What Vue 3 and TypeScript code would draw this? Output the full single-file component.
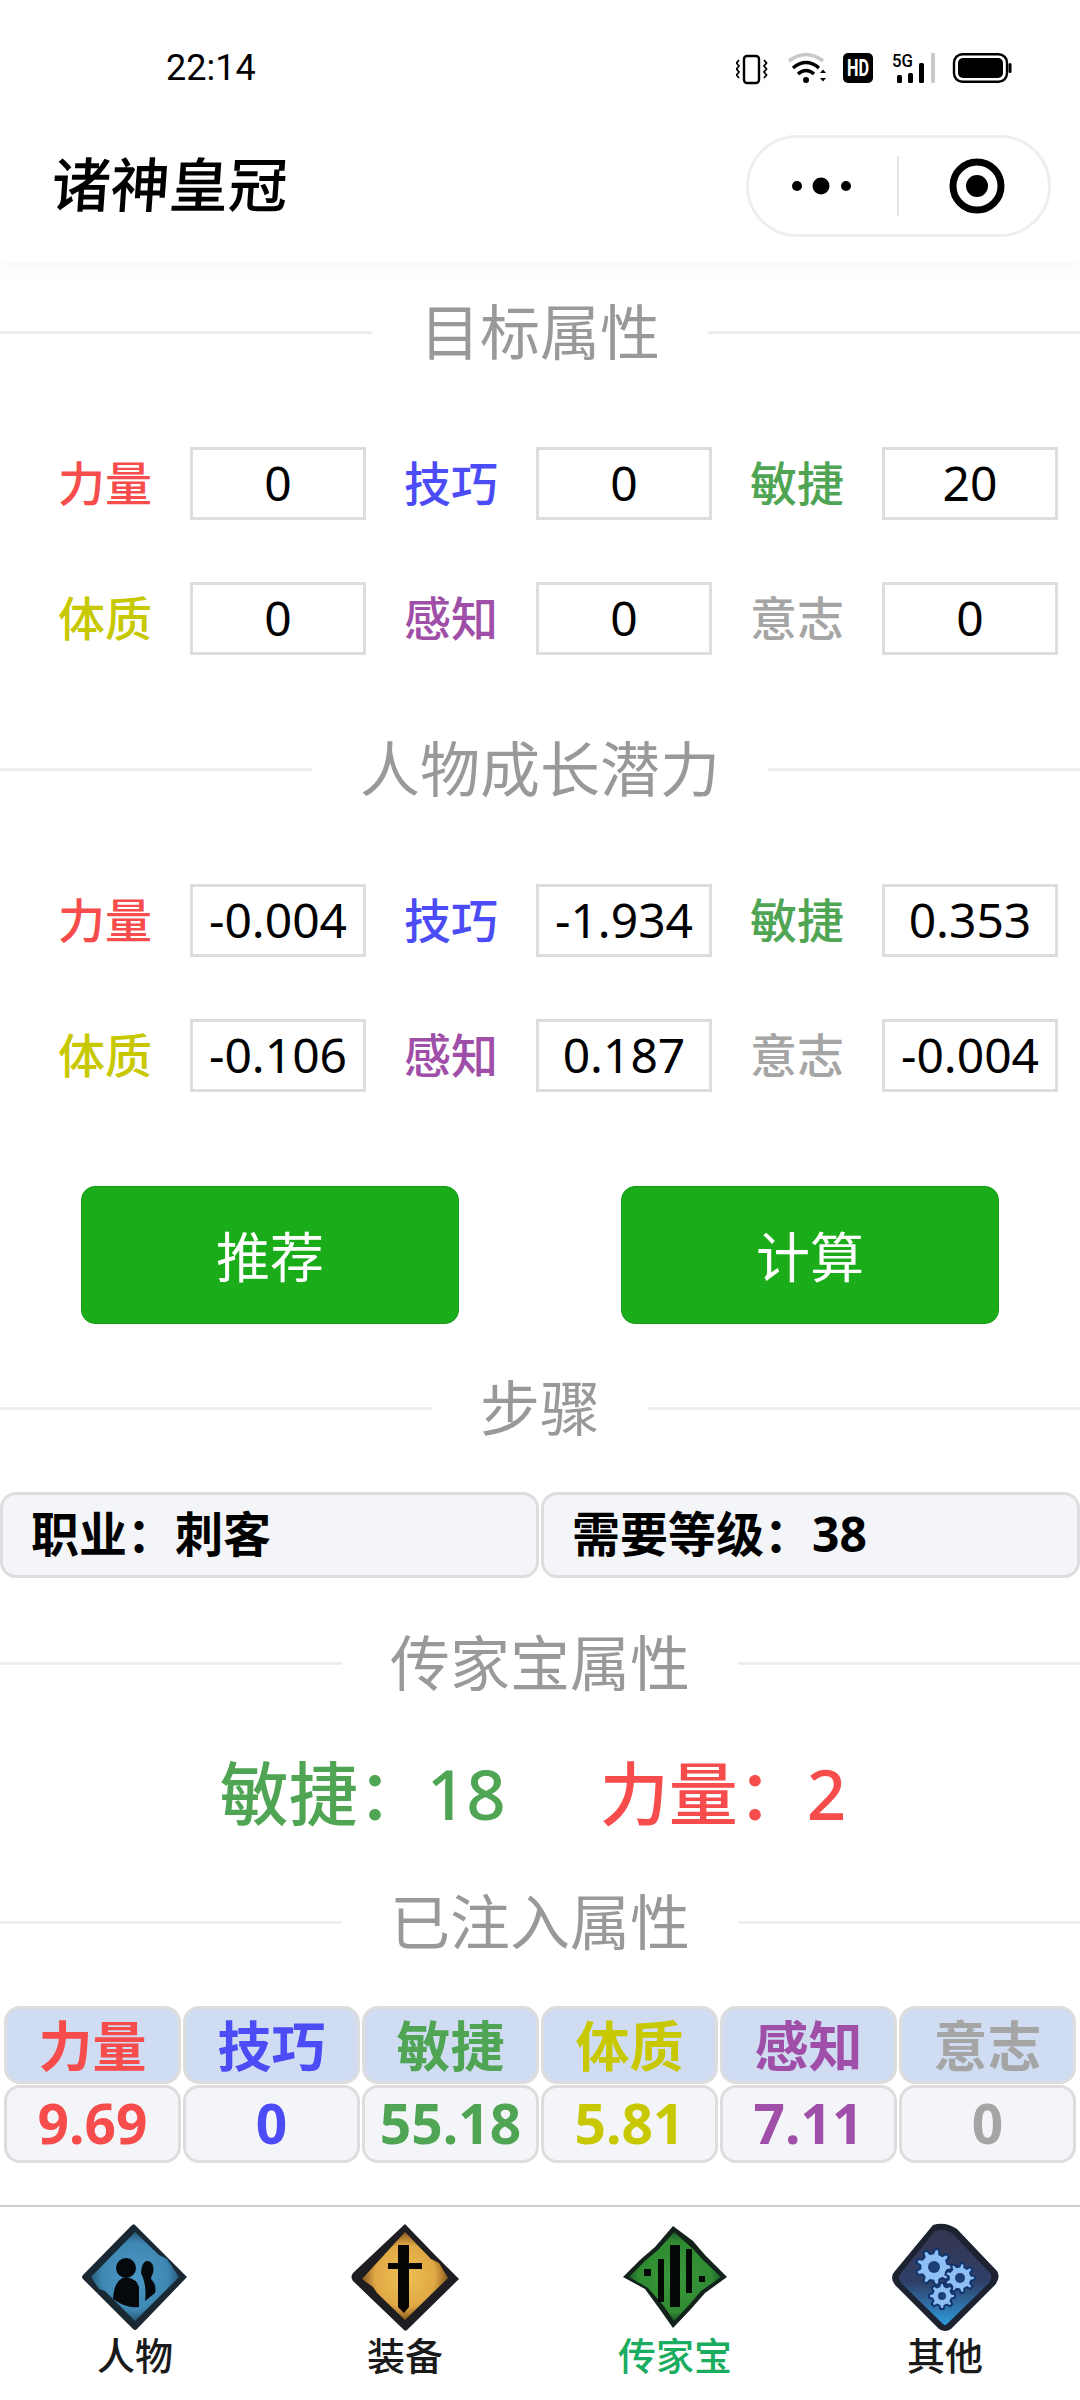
<script setup lang="ts">
// ── Dados ──────────────────────────────────────────────
interface Attr {
  name: string
  color: string
}

const ATTRS: Attr[] = [
  { name: '力量', color: '#f74c4c' },
  { name: '技巧', color: '#4c4cf7' },
  { name: '敏捷', color: '#4fa553' },
  { name: '体质', color: '#c8c800' },
  { name: '感知', color: '#a04fa8' },
  { name: '意志', color: '#a5a5a5' },
]

const target = ['0', '0', '20', '0', '0', '0']
const growth = ['-0.004', '-1.934', '0.353', '-0.106', '0.187', '-0.004']
const injected = ['9.69', '0', '55.18', '5.81', '7.11', '0']
const tabs = ['人物', '装备', '传家宝', '其他']

// Dois-pontos de largura cheia
const COLON = '\uFF1A'

// Engrenagem do ícone "其他"
function gearPath(cx: number, cy: number, r: number, teeth: number): string {
  const pts: string[] = []
  const inner = r * 0.76
  const step = (Math.PI * 2) / teeth
  for (let i = 0; i < teeth; i++) {
    const a = i * step
    const corners: [number, number][] = [
      [inner, a - step * 0.32],
      [r, a - step * 0.16],
      [r, a + step * 0.16],
      [inner, a + step * 0.32],
    ]
    for (const [rad, ang] of corners) {
      pts.push(`${(cx + rad * Math.cos(ang)).toFixed(1)} ${(cy + rad * Math.sin(ang)).toFixed(1)}`)
    }
  }
  return 'M' + pts.join('L') + 'Z'
}

const gears = [
  { x: 43, y: 44, r: 18, hole: 6, teeth: 9 },
  { x: 69, y: 55, r: 15, hole: 5, teeth: 9 },
  { x: 51, y: 73, r: 13, hole: 4, teeth: 8 },
]
</script>

<template>
  <div class="page">
    <div class="status">
      <span class="time">22:14</span>
      <svg class="status-icons" width="276" height="44" viewBox="0 -7 276 44">
        <rect x="8" y="3" width="15" height="27" rx="3" fill="none" stroke="#000" stroke-width="2.4" />
        <path d="M3 7l-2.500 3 2.500 3-2.500 3 2.500 3-2.500 3 2.500 3M28 7l2.500 3-2.500 3 2.500 3-2.500 3 2.500 3-2.500 3" fill="none" stroke="#000" stroke-width="1.800" />
        <path d="M53 8Q70-5 87 8" fill="none" stroke="#c9c9c9" stroke-width="3.500" />
        <path d="M57 15Q70 4 83 15M62 21Q70 14 78 21" fill="none" stroke="#000" stroke-width="3.500" />
        <circle cx="70" cy="27" r="3" fill="#000" />
        <path d="M84 20l3-3.500 3 3.500zM84 25l3 3.500 3-3.500z" fill="#000" />
        <rect x="107" y="0" width="30" height="30" rx="5" fill="#000" />
        <text x="111" y="23" class="hd" textLength="22" lengthAdjust="spacingAndGlyphs">HD</text>
        <text x="156" y="14" class="fiveg" textLength="21" lengthAdjust="spacingAndGlyphs">5G</text>
        <rect x="161" y="22" width="5" height="8" rx="1.500" fill="#000" />
        <rect x="172" y="20" width="5" height="10" rx="1.500" fill="#000" />
        <rect x="183" y="10" width="5" height="20" rx="1.500" fill="#000" />
        <rect x="195" y="0" width="4" height="30" rx="1" fill="#c9c9c9" />
        <rect x="218" y="1.200" width="53" height="27.600" rx="8.500" fill="none" stroke="#000" stroke-width="2.400" />
        <rect x="222" y="5" width="45" height="20" rx="5" fill="#000" />
        <rect x="272.500" y="10" width="3" height="10" rx="1.500" fill="#000" />
      </svg>
    </div>

    <div class="nav">
      <span class="app-title">诸神皇冠</span>
      <div class="capsule">
        <svg width="100" height="30" viewBox="0 0 100 30" class="dots">
          <circle cx="26" cy="15" r="5" fill="#000" />
          <circle cx="50" cy="15" r="8.500" fill="#000" />
          <circle cx="75" cy="15" r="5" fill="#000" />
        </svg>
        <span class="capsule-div"></span>
        <svg width="60" height="60" viewBox="0 0 60 60" class="target">
          <circle cx="30" cy="30" r="24" fill="none" stroke="#000" stroke-width="7" />
          <circle cx="30" cy="30" r="11" fill="#000" />
        </svg>
      </div>
    </div>

    <div class="title first"><i></i><span>目标属性</span><i></i></div>
    <div class="grid">
      <div v-for="(a, i) in ATTRS" :key="a.name" class="cell">
        <span class="cell-label" :style="{ color: a.color }">{{ a.name }}</span>
        <input class="cell-input" readonly :value="target[i]" />
      </div>
    </div>

    <div class="title"><i></i><span>人物成长潜力</span><i></i></div>
    <div class="grid">
      <div v-for="(a, i) in ATTRS" :key="a.name" class="cell">
        <span class="cell-label" :style="{ color: a.color }">{{ a.name }}</span>
        <input class="cell-input" readonly :value="growth[i]" />
      </div>
    </div>

    <div class="actions">
      <button class="btn">推荐</button>
      <button class="btn">计算</button>
    </div>

    <div class="title steps"><i></i><span>步骤</span><i></i></div>
    <div class="info">
      <div class="info-box">职业{{ COLON }}刺客</div>
      <div class="info-box">需要等级{{ COLON }}38</div>
    </div>

    <div class="title heir"><i></i><span>传家宝属性</span><i></i></div>
    <div class="heir-attrs">
      <span class="green">敏捷{{ COLON }}18</span>
      <span class="red">力量{{ COLON }}2</span>
    </div>

    <div class="title injected"><i></i><span>已注入属性</span><i></i></div>
    <div class="table">
      <div v-for="a in ATTRS" :key="a.name" class="th" :style="{ color: a.color }">{{ a.name }}</div>
      <div v-for="(a, i) in ATTRS" :key="a.name" class="td" :style="{ color: a.color }">{{ injected[i] }}</div>
    </div>

    <div class="tabbar">
      <div v-for="(t, i) in tabs" :key="t" class="tab" :class="{ active: i === 2 }">
        <svg v-if="i === 0" class="tab-icon" width="108" height="108" viewBox="0 0 108 108">
          <defs>
            <radialGradient id="blue">
              <stop offset="0" stop-color="#4b97c6" />
              <stop offset="0.75" stop-color="#3f88b4" />
              <stop offset="1" stop-color="#275a78" />
            </radialGradient>
          </defs>
          <path d="M54 2L106 54 56 106Q54 108 52 106L2 56Q0 54 2 52L50 3Q53 0 54 2Z" fill="#1a2834" />
          <path d="M54 9L78 32 86 36 98 54 54 98 24 68 18 66 10 54Z" fill="url(#blue)" />
          <circle cx="45" cy="45" r="10" fill="#06090c" />
          <path d="M32 76Q33 56 45 54 56 56 58 64L58 84Q46 86 32 76Z" fill="#06090c" />
          <path d="M60 50Q61 37 67 38 74 40 72 50 70 54 70 56 76 62 74 70L64 78Q66 62 60 50Z" fill="#06090c" />
        </svg>
        <svg v-else-if="i === 1" class="tab-icon" width="108" height="108" viewBox="0 0 108 108">
          <defs>
            <radialGradient id="gold">
              <stop offset="0" stop-color="#eec056" />
              <stop offset="0.7" stop-color="#e0a945" />
              <stop offset="1" stop-color="#8c5a1e" />
            </radialGradient>
          </defs>
          <path d="M54 1L82 30 108 56 56 107Q54 109 52 106L2 58Q-1 54 2 50Z" fill="#1d1d22" />
          <path d="M54 9L80 36 88 40 97 55 54 97 26 70 22 64 11 56Z" fill="url(#gold)" />
          <path d="M47 22H58V40H71V46H58V84L53 90 47 84V46H37V40H47Z" fill="#060504" />
        </svg>
        <svg v-else-if="i === 2" class="tab-icon" width="108" height="108" viewBox="0 0 108 108">
          <defs>
            <radialGradient id="green">
              <stop offset="0" stop-color="#3a9a3a" />
              <stop offset="0.8" stop-color="#2f8a31" />
              <stop offset="1" stop-color="#1c5a28" />
            </radialGradient>
          </defs>
          <path d="M52 3L72 18 84 32 106 54 84 70 70 86 52 105 40 88 24 66 2 54 20 36 34 24Z" fill="#12211a" />
          <path d="M53 9L72 26 82 37 100 54 80 68 68 82 53 98 42 82 27 65 8 54 24 38 38 26Z" fill="url(#green)" />
          <rect x="49" y="22" width="10" height="62" fill="#040804" />
          <rect x="37" y="36" width="6" height="43" fill="#040804" />
          <rect x="65" y="26" width="6" height="44" fill="#040804" />
          <rect x="23" y="46" width="7" height="7" fill="#040804" />
          <rect x="78" y="53" width="6" height="6" fill="#040804" />
        </svg>
        <svg v-else class="tab-icon" width="108" height="108" viewBox="0 0 108 108">
          <defs>
            <linearGradient id="steel" x1="0" y1="0" x2="0" y2="1">
              <stop offset="0" stop-color="#343650" />
              <stop offset="0.55" stop-color="#2f3f68" />
              <stop offset="1" stop-color="#2f9bdc" />
            </linearGradient>
          </defs>
          <path d="M42 2Q54-2 66 6L106 48Q110 54 104 62L60 106Q54 110 48 106L4 62Q-2 54 4 48Z" fill="#1c2230" />
          <path d="M44 8Q54 5 62 11L99 50Q102 54 98 60L56 101Q54 103 52 101L10 60Q6 54 10 50Z" fill="url(#steel)" />
          <g v-for="g in gears" :key="g.x">
            <path :d="gearPath(g.x, g.y, g.r, g.teeth)" fill="#8fc0f5" stroke="#12356e" stroke-width="2" />
            <circle :cx="g.x" :cy="g.y" :r="g.hole" fill="#1d3f78" />
          </g>
        </svg>
        <span class="tab-label">{{ t }}</span>
      </div>
    </div>
  </div>
</template>

<style scoped>
.page {
  width: 1080px;
  height: 2400px;
  display: flex;
  flex-direction: column;
  background: #fff;
  font-family: 'Noto Sans', 'Noto Sans CJK SC', sans-serif;
  overflow: hidden;
}

.status {
  height: 90px;
  box-sizing: border-box;
  padding: 46px 68px 0 166px;
  display: flex;
  align-items: flex-start;
  justify-content: space-between;
}
.time {
  font-family: Roboto, sans-serif;
  font-size: 36px;
  line-height: 44px;
  color: #000;
}
.hd {
  font: 700 23px Roboto, sans-serif;
  fill: #fff;
}
.fiveg {
  font: 500 18px Roboto, sans-serif;
  fill: #000;
}

.nav {
  height: 172px;
  box-sizing: border-box;
  padding: 19px 29px 0 52px;
  display: flex;
  align-items: center;
  justify-content: space-between;
  box-shadow: 0 6px 18px rgba(0, 0, 0, 0.035);
}
.app-title {
  font: 500 59px/70px 'Noto Sans CJK SC', sans-serif;
  color: #000;
  margin-bottom: 7px;
  transform: skewX(-4deg);
}
.capsule {
  width: 305px;
  height: 102px;
  box-sizing: border-box;
  border: 3px solid #eee;
  border-radius: 51px;
  display: flex;
  align-items: center;
}
.dots {
  margin-left: 22px;
}
.capsule-div {
  width: 2px;
  height: 60px;
  background: #e5e5e5;
  margin-left: 26px;
}
.target {
  margin-left: 48px;
}

.title {
  display: flex;
  align-items: center;
  margin-top: 74px;
  height: 80px;
  color: #999;
  font: 400 60px/80px 'Noto Sans CJK SC', sans-serif;
}
.title i {
  flex: 1;
  height: 3px;
  background: #eee;
  margin-top: 1px;
}
.title span {
  padding: 0 48px 6px;
}
.title.first {
  margin-top: 30px;
}
.title.steps {
  margin-top: 44px;
}
.title.heir {
  margin-top: 45px;
}
.title.injected {
  margin-top: 39px;
}

.grid {
  margin-top: 75px;
  padding: 0 23px 0 20px;
  display: grid;
  grid-template-columns: repeat(3, 1fr);
  row-gap: 62px;
}
.cell {
  display: flex;
  align-items: center;
}
.cell-label {
  width: 170px;
  padding-bottom: 5px;
  text-align: center;
  font: 500 47px/68px 'Noto Sans CJK SC', sans-serif;
}
.cell-input {
  width: 176px;
  height: 73px;
  box-sizing: border-box;
  padding: 0 0 2px;
  border: 3px solid #ddd;
  border-radius: 0;
  outline: none;
  background: #fff;
  color: #000;
  text-align: center;
  font: 400 48px 'Noto Sans', sans-serif;
}

.actions {
  margin-top: 94px;
  padding: 0 81px;
  display: flex;
  justify-content: space-between;
}
.btn {
  width: 378px;
  height: 138px;
  box-sizing: border-box;
  padding: 0 0 2px;
  border: 1px solid #179b16;
  border-radius: 14px;
  background: #1aad19;
  color: #fff;
  font: 400 54px 'Noto Sans CJK SC', sans-serif;
}

.info {
  margin-top: 44px;
  display: flex;
  gap: 2px;
}
.info-box {
  flex: 1;
  height: 86px;
  box-sizing: border-box;
  padding-left: 28px;
  border: 3px solid #ddd;
  border-radius: 16px;
  background: #f3f5f8;
  color: #000;
  font: 700 48px/78px 'Noto Sans', 'Noto Sans CJK SC', sans-serif;
}

.heir-attrs {
  margin-top: 40px;
  height: 100px;
  box-sizing: border-box;
  padding-right: 14px;
  display: flex;
  justify-content: center;
  gap: 94px;
  font: 500 69px/100px 'Noto Sans', 'Noto Sans CJK SC', sans-serif;
}
.green {
  color: #4fa553;
}
.red {
  color: #f74c4c;
}

.table {
  margin-top: 44px;
  padding: 0 4px;
  display: grid;
  grid-template-columns: repeat(6, 1fr);
  column-gap: 2px;
  row-gap: 1px;
}
.th,
.td {
  height: 78px;
  box-sizing: border-box;
  border: 3px solid #ddd;
  border-radius: 16px;
  text-align: center;
  font: 700 55px/70px 'Noto Sans', 'Noto Sans CJK SC', sans-serif;
}
.th {
  background: #d0dcf2;
  font-size: 54px;
  line-height: 74px;
}
.td {
  background: #f3f5f8;
}

.tabbar {
  margin-top: auto;
  height: 195px;
  box-sizing: border-box;
  border-top: 2px solid #ccc;
  padding-top: 16px;
  display: grid;
  grid-template-columns: repeat(4, 1fr);
}
.tab {
  display: flex;
  flex-direction: column;
  align-items: center;
}
.tab-icon {
  filter: blur(0.5px);
}
.tab-label {
  font: 500 38px/46px 'Noto Sans CJK SC', sans-serif;
  color: #1a1a1a;
}
.tab.active .tab-label {
  color: #1aad5f;
}
</style>
